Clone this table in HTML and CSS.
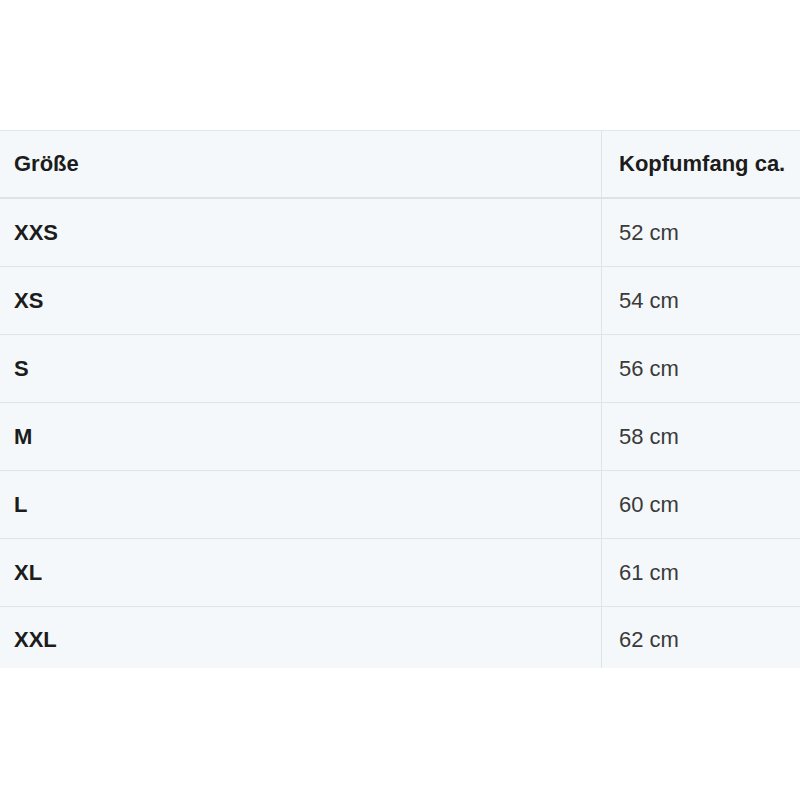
FILE: index.html
```html
<!DOCTYPE html>
<html lang="de">
<head>
<meta charset="utf-8">
<title>Größentabelle</title>
<link rel="stylesheet" href="styles.css">
</head>
<body>
<table class="size-table">
  <thead>
    <tr><th class="col-size">Größe</th><th class="col-value">Kopfumfang ca.</th></tr>
  </thead>
  <tbody>
    <tr><td class="col-size">XXS</td><td class="col-value">52 cm</td></tr>
    <tr><td class="col-size">XS</td><td class="col-value">54 cm</td></tr>
    <tr><td class="col-size">S</td><td class="col-value">56 cm</td></tr>
    <tr><td class="col-size">M</td><td class="col-value">58 cm</td></tr>
    <tr><td class="col-size">L</td><td class="col-value">60 cm</td></tr>
    <tr><td class="col-size">XL</td><td class="col-value">61 cm</td></tr>
    <tr class="last-row"><td class="col-size">XXL</td><td class="col-value">62 cm</td></tr>
  </tbody>
</table>
</body>
</html>
```
FILE: styles.css
```css
html, body {
  margin: 0;
  padding: 0;
  background: #ffffff;
}
body {
  font-family: "Liberation Sans", Arial, sans-serif;
  font-size: 22px;
  color: #333;
}
.size-table {
  margin-top: 130px;
  width: 100%;
  border-collapse: collapse;
  background: #f5f8fa;
  border-top: 1px solid #e2e7eb;
}
.size-table th,
.size-table td {
  height: 67px;
  padding: 0;
  text-align: left;
  vertical-align: middle;
  border-bottom: 1px solid #dfe4e8;
}
.size-table thead th {
  font-weight: bold;
  color: #1c1c1c;
  height: 66px;
  border-bottom: 2px solid #dde2e6;
}
.size-table .last-row td {
  border-bottom: none;
  height: 57px;
  padding-top: 4px;
}
.col-size {
  width: 587px;
  padding-left: 14px !important;
  border-right: 1px solid #dfe4e8;
}
td.col-size {
  font-weight: bold;
  color: #1c1c1c;
}
.col-value {
  padding-left: 17px !important;
}
td.col-value {
  color: #3a3a3a;
}
```
